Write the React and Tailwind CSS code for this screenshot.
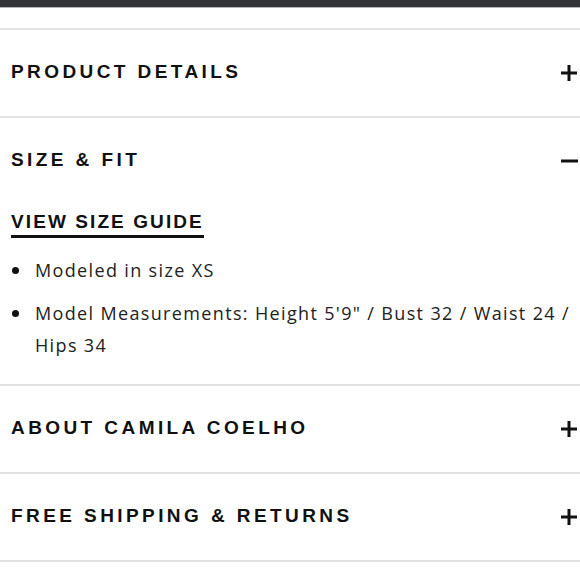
const head = "font-['Liberation_Sans',Arial,sans-serif] font-bold text-[19px] tracking-[0.18em] text-[#111] leading-none";

function Plus() {
  return (
    <svg width="16" height="16" viewBox="0 0 16 16" className="shrink-0">
      <rect x="0" y="6.5" width="16" height="3" fill="#111" />
      <rect x="6.5" y="0" width="3" height="16" fill="#111" />
    </svg>
  );
}

function Minus() {
  return (
    <svg width="17" height="16" viewBox="0 0 17 16" className="shrink-0">
      <rect x="0" y="6.5" width="17" height="3" fill="#111" />
    </svg>
  );
}

function Row({ title, open }) {
  return (
    <div className="h-[86px] flex items-center justify-between pl-[11px] pr-[3px]">
      <span className={`${head} pb-[4px]`}>{title}</span>
      {open ? <Minus /> : <Plus />}
    </div>
  );
}

function Bullet({ children, className = "" }) {
  return (
    <li className={`flex ${className}`}>
      <span className="w-[24px] shrink-0 h-[32px] flex items-center">
        <span className="w-[7px] h-[7px] rounded-full bg-[#111] ml-[1px]" />
      </span>
      <span>{children}</span>
    </li>
  );
}

export default function App() {
  const body = "font-['Open_Sans',Arial,sans-serif] text-[18px] tracking-[0.075em] text-[#222] leading-[32px]";
  return (
    <div className="w-[580px] h-[580px] bg-white overflow-hidden">
      <div className="h-[7px] bg-[#333438]" />
      <div className="h-px bg-[#b5b5b5]" />
      <div className="h-[20px]" />
      <div className="h-[2px] bg-[#e2e2e2]" />
      <Row title="PRODUCT DETAILS" />
      <div className="h-[2px] bg-[#e2e2e2]" />

      {/* Size & fit, expanded */}
      <div className="h-[266px]">
        <div className="h-[86px] flex items-center justify-between pl-[11px] pr-[2px]">
          <span className={`${head} pb-[4px]`}>SIZE &amp; FIT</span>
          <Minus />
        </div>
        <div className="pl-[11px] pt-[6px]">
          <span className="inline-block font-['Liberation_Sans',Arial,sans-serif] font-bold text-[19px] tracking-[0.11em] text-[#111] leading-none pb-[4px] border-b-[3px] border-[#111]">
            VIEW SIZE GUIDE
          </span>
        </div>
        <ul className={`${body} mt-[16px] pl-[11px] pr-[8px]`}>
          <Bullet>Modeled in size XS</Bullet>
          <Bullet className="mt-[11px]">
            Model Measurements: Height 5'9" / Bust 32 / Waist 24 / Hips 34
          </Bullet>
        </ul>
      </div>
      <div className="h-[2px] bg-[#e2e2e2]" />
      <Row title="ABOUT CAMILA COELHO" />
      <div className="h-[2px] bg-[#e2e2e2]" />
      <Row title="FREE SHIPPING & RETURNS" />
      <div className="h-[2px] bg-[#e2e2e2]" />
    </div>
  );
}
